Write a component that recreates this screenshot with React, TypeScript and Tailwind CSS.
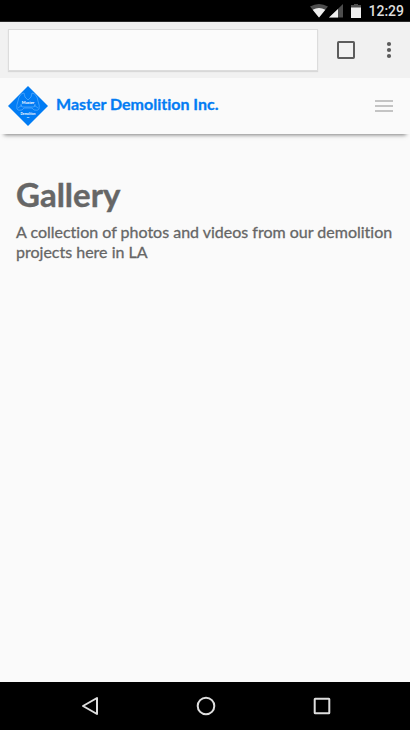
import React from 'react';

function StatusBar() {
  return (
    <div className="flex h-[22px] shrink-0 items-center justify-end border-b border-[#2a2a2a] bg-black pr-[6px] font-['Roboto',sans-serif]">
      <svg width="18" height="14" viewBox="0 0 18 14" aria-hidden="true">
        <path d="M9 13.5 0 2.5Q9-2.5 18 2.5Z" fill="#4d4d4d" />
        <path d="M9 13.5 2.7 5.8Q9 2.2 15.3 5.8Z" fill="#eee" />
      </svg>
      <svg className="ml-px" width="14" height="14" viewBox="0 0 14 14" aria-hidden="true">
        <path d="M0 13.5 14 0V13.5Z" fill="#4d4d4d" />
        <path d="M0 13.5 9 5V13.5Z" fill="#eee" />
      </svg>
      <svg className="ml-2" width="10" height="14" viewBox="0 0 10 14" aria-hidden="true">
        <path d="M0 1H3V0H7V1H10V4H0Z" fill="#4d4d4d" />
        <path d="M0 3.5H10V14H0Z" fill="#eee" />
      </svg>
      <time className="ml-[7px] text-sm leading-5 font-medium text-[#dedede]">12:29</time>
    </div>
  );
}

function BrowserBar() {
  return (
    <div className="flex h-14 shrink-0 items-center bg-[#f1f1f1] pl-2">
      <input
        type="text"
        aria-label="Address"
        className="h-[42px] min-w-0 flex-1 border border-[#dcdcdc] bg-[#fbfbfb] px-3 shadow-[0_1px_1px_#d8d8d8] outline-none"
      />
      <button type="button" aria-label="Open tabs" className="ml-[18px] p-0">
        <svg width="20" height="20" viewBox="0 0 20 20">
          <rect x="2" y="2" width="16" height="16" rx="0.7" fill="none" stroke="#5c5c5c" strokeWidth="2" />
        </svg>
      </button>
      <button type="button" aria-label="More options" className="mr-[11px] ml-[23px] p-0">
        <svg width="20" height="20" viewBox="0 0 20 20" fill="#5c5c5c">
          <circle cx="10" cy="4" r="2.1" />
          <circle cx="10" cy="10" r="2.1" />
          <circle cx="10" cy="16" r="2.1" />
        </svg>
      </button>
    </div>
  );
}

function Logo() {
  return (
    <svg width="40" height="40" viewBox="0 0 40 40" aria-hidden="true">
      <path d="M20 0 40 20 20 40 0 20Z" fill="#017cf4" />
      <g fill="none" stroke="#6bb7ff" strokeWidth="0.6">
        <path d="M16 7Q11 8 10 15Q8 20 9 23Q10 25 14 24L16 22H24L26 24Q30 25 31 23Q32 20 30 15Q29 8 24 7" />
        <path d="M16 7 17 11 20 14 23 11 24 7M13 18Q12 21 15 21H25Q28 21 27 18M10 22 14 19M30 22 26 19" />
      </g>
      <g fill="#fff" textAnchor="middle" fontFamily="Lato, sans-serif" fontWeight="700">
        <text x="20" y="18" fontSize="4">Master</text>
        <text x="20" y="29" fontSize="3">Demolition</text>
        <text x="20" y="32" fontSize="2">Inc</text>
      </g>
    </svg>
  );
}

function Header() {
  return (
    <header className="flex h-14 shrink-0 items-center bg-[#fafafa] px-2 shadow-[0_5px_4px_-4px_rgba(0,0,0,0.5)]">
      <a href="#home" className="flex items-center gap-2 text-base leading-5 font-bold text-[#047cf3]">
        <Logo />
        <span className="pb-1 [-webkit-text-stroke:0.3px]">Master Demolition Inc.</span>
      </a>
      <button type="button" aria-label="Open menu" className="mr-2 ml-auto p-0">
        <svg width="20" height="14" viewBox="0 0 20 14" fill="#c4c4c4">
          <path d="M1 1H19V3H1ZM1 6H19V8H1ZM1 11H19V13H1Z" />
        </svg>
      </button>
    </header>
  );
}

function NavigationBar() {
  return (
    <nav
      aria-label="System navigation"
      className="flex h-12 shrink-0 items-center justify-center gap-24 bg-black pl-[2px]"
    >
      <button type="button" aria-label="Back">
        <svg width="20" height="20" viewBox="0 0 20 20" fill="none" stroke="#dedede" strokeWidth="2">
          <path d="M17 2V18L3 10Z" strokeLinejoin="round" />
        </svg>
      </button>
      <button type="button" aria-label="Home">
        <svg width="20" height="20" viewBox="0 0 20 20" fill="none" stroke="#dedede" strokeWidth="2">
          <circle cx="10" cy="10" r="8.3" />
        </svg>
      </button>
      <button type="button" aria-label="Recent apps">
        <svg width="20" height="20" viewBox="0 0 20 20" fill="none" stroke="#dedede" strokeWidth="2">
          <rect x="2.7" y="2.7" width="14.6" height="14.6" rx="0.5" />
        </svg>
      </button>
    </nav>
  );
}

export default function App() {
  return (
    <div className="flex min-h-screen flex-col bg-[#fafafa] font-['Lato',sans-serif] text-[#666] [font-variant-ligatures:none]">
      <StatusBar />
      <BrowserBar />
      <Header />
      <main className="flex-1 px-4 pt-10">
        <h1 className="text-[33px] leading-10 font-bold [-webkit-text-stroke:0.4px]">Gallery</h1>
        <p className="mt-2 text-base leading-5 font-normal [-webkit-text-stroke:0.3px]">
          A collection of photos and videos from our demolition projects here in LA
        </p>
      </main>
      <NavigationBar />
    </div>
  );
}
